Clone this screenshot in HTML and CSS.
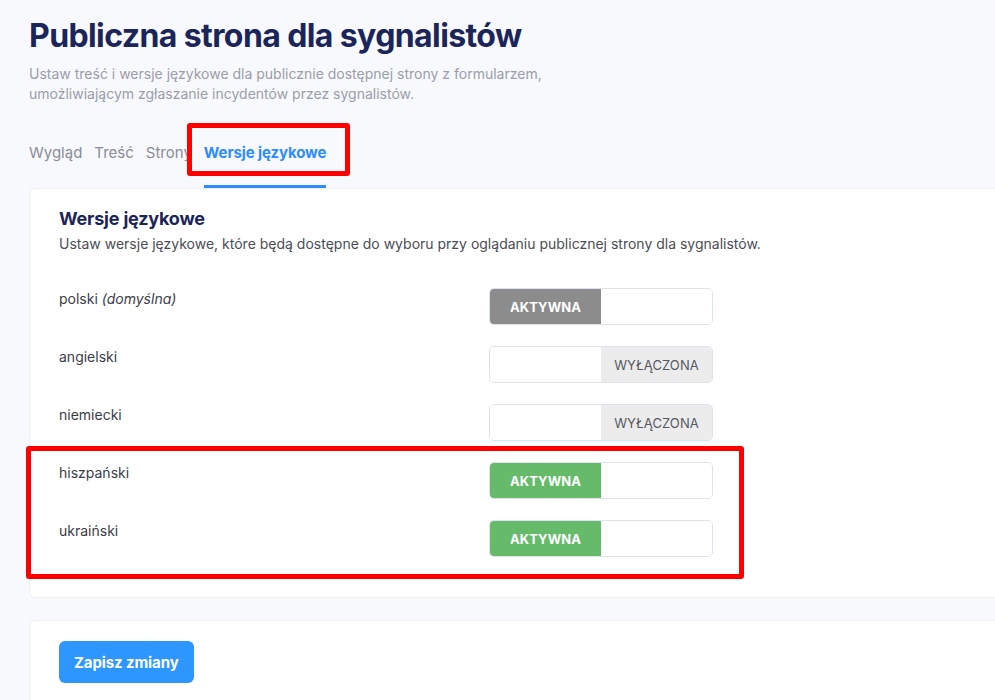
FILE: index.html
```html
<!DOCTYPE html>
<html lang="pl">
<head>
<meta charset="utf-8">
<title>Publiczna strona dla sygnalistów</title>
<link rel="stylesheet" href="styles.css">
</head>
<body>
<main class="page">
  <header class="page-header">
    <h1 class="page-title">Publiczna strona dla sygnalistów</h1>
    <p class="page-desc">Ustaw treść i wersje językowe dla publicznie dostępnej strony z formularzem,<br>umożliwiającym zgłaszanie incydentów przez sygnalistów.</p>
  </header>

  <nav class="tabs">
    <a class="tab">Wygląd</a>
    <a class="tab">Treść</a>
    <a class="tab">Strony</a>
    <a class="tab tab-active">Wersje językowe<span class="mark mark-tab"></span></a>
  </nav>

  <section class="card">
    <h2 class="card-title">Wersje językowe</h2>
    <p class="card-desc">Ustaw wersje językowe, które będą dostępne do wyboru przy oglądaniu publicznej strony dla sygnalistów.</p>

    <div class="rows">
      <div class="row">
        <div class="label">polski <em>(domyślna)</em></div>
        <div class="toggle">
          <span class="seg seg-on seg-default">AKTYWNA</span>
          <span class="seg"></span>
        </div>
      </div>
      <div class="row">
        <div class="label">angielski</div>
        <div class="toggle">
          <span class="seg"></span>
          <span class="seg seg-off">WYŁĄCZONA</span>
        </div>
      </div>
      <div class="row">
        <div class="label">niemiecki</div>
        <div class="toggle">
          <span class="seg"></span>
          <span class="seg seg-off">WYŁĄCZONA</span>
        </div>
      </div>
      <div class="group">
        <span class="mark mark-group"></span>
        <div class="row">
          <div class="label">hiszpański</div>
          <div class="toggle">
            <span class="seg seg-on">AKTYWNA</span>
            <span class="seg"></span>
          </div>
        </div>
        <div class="row">
          <div class="label">ukraiński</div>
          <div class="toggle">
            <span class="seg seg-on">AKTYWNA</span>
            <span class="seg"></span>
          </div>
        </div>
      </div>
    </div>
  </section>

  <section class="card card-actions">
    <button class="btn-primary" type="button">Zapisz zmiany</button>
  </section>
</main>
</body>
</html>
```

FILE: styles.css
```css
* { box-sizing: border-box; }

html, body {
  margin: 0;
  padding: 0;
  background: #f8f9fd;
  overflow: hidden;
}

body {
  font-family: Inter, "Noto Sans", "Liberation Sans", sans-serif;
  color: #1b2559;
}

.page {
  width: 1010px;
  padding: 14px 0 0 29px;
}

.page-header { margin: 0; }

.page-title {
  margin: 0;
  font-size: 32px;
  line-height: 44px;
  font-weight: 700;
  letter-spacing: -0.6px;
  color: #1b2559;
}

.page-desc {
  margin: 6px 0 0;
  font-size: 14px;
  line-height: 20px;
  color: #9a9dab;
}

.tabs {
  display: flex;
  gap: 12px;
  margin-top: 36px;
}

.tab {
  position: relative;
  font-size: 15px;
  line-height: 20px;
  color: #8a8d99;
  padding: 3px 0 0;
  height: 48px;
  border-bottom: 3px solid transparent;
}

.tab-active {
  color: #2f8cff;
  font-weight: 700;
  border-bottom-color: #2f8cff;
  letter-spacing: -0.1px;
}

.mark {
  position: absolute;
  border: 5px solid #ff0000;
  border-radius: 3px;
  pointer-events: none;
}

.mark-tab {
  left: -17px;
  right: -24px;
  top: -17px;
  height: 53px;
}

.card {
  background: #ffffff;
  border: 1px solid #eef0f4;
  border-right: none;
  border-radius: 6px 0 0 6px;
  padding: 18px 30px 40px 29px;
}

.card-title {
  margin: 0;
  font-size: 18px;
  line-height: 24px;
  font-weight: 700;
  letter-spacing: -0.2px;
  color: #1b2559;
}

.card-desc {
  margin: 3px 0 0;
  font-size: 14px;
  line-height: 20px;
  color: #4a4d57;
}

.rows {
  margin-top: 34px;
  display: flex;
  flex-direction: column;
  gap: 21px;
}

.group {
  position: relative;
  display: flex;
  flex-direction: column;
  gap: 21px;
}

.mark-group {
  left: -33px;
  top: -16px;
  width: 718px;
  height: 133px;
}

.row {
  display: flex;
  align-items: flex-start;
}

.label {
  width: 430px;
  padding-top: 2px;
  font-size: 14px;
  line-height: 18px;
  color: #3a3d48;
}

.label em {
  font-style: italic;
}

.toggle {
  display: flex;
  width: 224px;
  height: 37px;
  border: 1px solid #dde2f0;
  border-radius: 5px;
  overflow: hidden;
}

.seg {
  flex: 0 0 111px;
  display: flex;
  align-items: center;
  justify-content: center;
  font-size: 13px;
  letter-spacing: 0.1px;
  background: #ffffff;
}

.seg + .seg { flex: 1 1 auto; }

.seg-on {
  background: #66bb6a;
  color: #ffffff;
  font-weight: 700;
}

.seg-default {
  background: #8c8c8c;
}

.seg-off {
  background: #ececec;
  color: #555860;
}

.card-actions {
  margin-top: 22px;
  padding: 20px 30px 30px 29px;
}

.btn-primary {
  font-family: inherit;
  font-size: 15px;
  font-weight: 700;
  color: #ffffff;
  background: #2d96ff;
  border: none;
  border-radius: 6px;
  height: 42px;
  padding: 0 15px;
  letter-spacing: -0.1px;
}
```
